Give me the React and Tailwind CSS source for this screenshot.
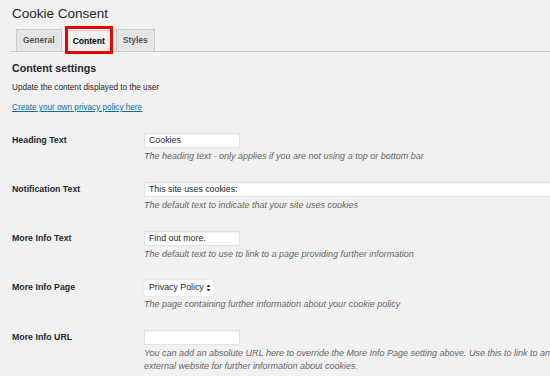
const rows = [
	{ label: "Heading Text", value: "Cookies", width: "w-[96px]", desc: ["The heading text - only applies if you are not using a top or bottom bar"] },
	{ label: "Notification Text", value: "This site uses cookies:", width: "w-[420px]", desc: ["The default text to indicate that your site uses cookies"] },
	{ label: "More Info Text", value: "Find out more.", width: "w-[96px]", desc: ["The default text to use to link to a page providing further information"] },
	{ label: "More Info Page", select: "Privacy Policy", desc: ["The page containing further information about your cookie policy"] },
	{ label: "More Info URL", value: "", width: "w-[96px]", desc: ["You can add an absolute URL here to override the More Info Page setting above. Use this to link to an", "external website for further information about cookies."] },
];

const App = () => {
	return (
		<div className="w-[550px] h-[376px] overflow-hidden bg-[#f1f1f1] text-[#23282d] font-['Liberation_Sans',Arial,sans-serif]">
			<h1 className="pl-[12px] pt-[5px] text-[13.5px] leading-[18px] text-[#23282d]">Cookie Consent</h1>

			<div className="mt-[7px] ml-[10px] flex items-end gap-[5px] pl-[6px] border-b border-[#ccc] h-[22px]">
				<div className="h-[22px] px-[6px] flex items-center bg-[#e5e5e5] border border-[#ccc] border-b-0 text-[8.5px] font-bold text-[#555]">General</div>
				<div className="relative h-[22px] -mb-px px-[5px] flex items-center bg-[#f1f1f1] border border-[#ccc] border-b-0 text-[8.5px] font-bold text-black">
					Content
					<div className="absolute -left-[3px] -right-[3px] -top-[5px] -bottom-[2px] border-[3px] border-[#ee0000]"></div>
				</div>
				<div className="h-[22px] px-[6px] flex items-center bg-[#e5e5e5] border border-[#ccc] border-b-0 text-[8.5px] font-bold text-[#555]">Styles</div>
			</div>

			<div className="pl-[12px]">
				<h2 className="mt-[9px] text-[10.7px] leading-[14px] font-bold">Content settings</h2>
				<p className="mt-[7px] text-[8.2px] leading-[12px]">Update the content displayed to the user</p>
				<a className="block mt-[8px] text-[8.2px] leading-[12px] text-[#0073aa] underline">Create your own privacy policy here</a>

				<div className="mt-[19px] flex flex-col gap-[19.5px]">
					{rows.map((row) => (
						<div key={row.label} className="flex">
							<div className="w-[132px] shrink-0 h-[15px] flex items-center text-[8.8px] font-bold">{row.label}</div>
							<div className="flex-1">
								{row.select ? (
									<div className="h-[16px] w-[70px] flex items-center justify-between pl-[5px] pr-[3px] bg-white rounded-[2px] shadow-[0_0_1px_rgba(0,0,0,0.3)] text-[8.8px] whitespace-nowrap">
										{row.select}
										<svg width="5" height="8" viewBox="0 0 5 8"><path d="M0.5 3L2.5 0.5L4.5 3Z M0.5 5L2.5 7.5L4.5 5Z" fill="#333" /></svg>
									</div>
								) : (
									<div className={`h-[15px] ${row.width} flex items-center pl-[4px] bg-white border border-[#e2e2e2] shadow-[inset_0_1px_1px_rgba(0,0,0,0.05)] text-[8.8px] overflow-hidden whitespace-nowrap`}>
										{row.value}
									</div>
								)}
								<div className="mt-[2px] text-[9px] leading-[12.5px] italic text-[#666]">
									{row.desc.map((line) => (
										<div key={line} className="whitespace-nowrap">{line}</div>
									))}
								</div>
							</div>
						</div>
					))}
				</div>
			</div>
		</div>
	);
};

export default App;
